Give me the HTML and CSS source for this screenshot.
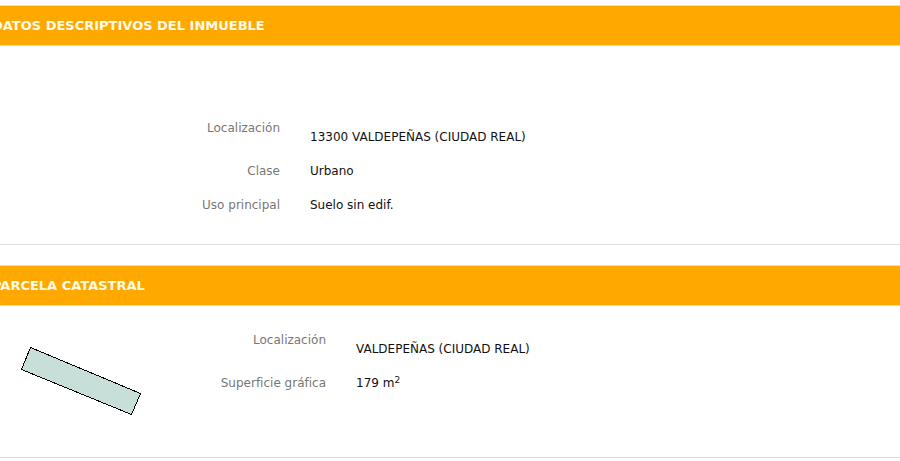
FILE: index.html
```html
<!DOCTYPE html>
<html lang="es">
<head>
<meta charset="utf-8">
<title>Datos descriptivos del inmueble</title>
<link rel="stylesheet" href="styles.css">
</head>
<body>
<main class="page">
  <section class="panel">
    <h2 class="panel-title">DATOS DESCRIPTIVOS DEL INMUEBLE</h2>
    <div class="panel-body panel-body-property">
      <dl class="fields fields-property">
        <dt>Localización</dt>
        <dd class="address">13300 VALDEPEÑAS (CIUDAD REAL)</dd>
        <dt>Clase</dt>
        <dd>Urbano</dd>
        <dt>Uso principal</dt>
        <dd>Suelo sin edif.</dd>
      </dl>
    </div>
  </section>
  <section class="panel">
    <h2 class="panel-title">PARCELA CATASTRAL</h2>
    <div class="panel-body panel-body-parcel">
      <svg class="parcel-map" viewBox="0 0 124 72" width="124" height="72" role="img" aria-label="Croquis de la parcela">
        <polygon points="10.5,1.5 120.5,47.5 111.5,68.5 1.5,23.5" fill="#c8dfd9" stroke="#000" stroke-width="1" shape-rendering="crispEdges"/>
      </svg>
      <dl class="fields fields-parcel">
        <dt>Localización</dt>
        <dd class="address">VALDEPEÑAS (CIUDAD REAL)</dd>
        <dt>Superficie gráfica</dt>
        <dd>179 m<sup>2</sup></dd>
      </dl>
    </div>
  </section>
</main>
</body>
</html>
```
FILE: styles.css
```css
* {
  box-sizing: border-box;
}

body {
  margin: 0;
  background: #fff;
  color: #111;
  font-family: Verdana, "DejaVu Sans", sans-serif;
  font-size: 12px;
  line-height: 18px;
  overflow-x: hidden;
}

.page {
  display: flex;
  flex-direction: column;
  gap: 20px;
  margin-left: -24px;
  padding-top: 5px;
}

.panel {
  border: solid #ddd;
  border-width: 1px 0;
}

.panel-title {
  margin: 0;
  padding: 10px 16px 9px;
  border-bottom: 1px solid #f3dba6;
  background: #ffa800;
  color: #fffbe6;
  font-size: 13px;
  font-weight: bold;
  line-height: 20px;
}

.panel-body {
  padding-left: 24px;
}

.panel-body-property {
  padding-top: 73px;
  padding-bottom: 30px;
}

.panel-body-parcel {
  display: flex;
  align-items: flex-start;
  padding-top: 25px;
  padding-bottom: 39px;
}

.parcel-map {
  flex: none;
  margin: 15px 0 0 20px;
}

.fields {
  display: grid;
  row-gap: 16px;
  column-gap: 30px;
  margin: 0;
}

.fields-property {
  grid-template-columns: 280px 1fr;
}

.fields-parcel {
  flex: 1;
  grid-template-columns: 182px 1fr;
}

.fields dt {
  color: #777;
  text-align: right;
}

.fields dd {
  margin: 0;
}

.fields .address {
  padding-top: 9px;
}

sup {
  font-size: 9px;
  line-height: 0;
  vertical-align: 4px;
}
```
